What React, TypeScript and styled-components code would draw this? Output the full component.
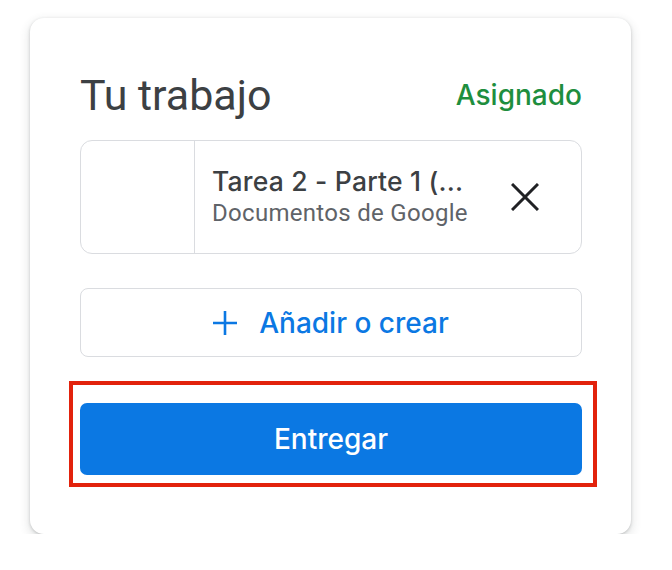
import styled, { createGlobalStyle } from 'styled-components'

const GlobalStyle = createGlobalStyle`
  * {
    box-sizing: border-box;
  }

  body {
    margin: 0;
    background: #fff;
    font-family: Roboto, 'Liberation Sans', sans-serif;
  }
`

const medium = `Inter, Roboto, 'Liberation Sans', sans-serif`

const Card = styled.section`
  width: 601px;
  margin: 18px 0 0 30px;
  padding: 52px 49px 59px 50px;
  background: #fff;
  border-radius: 14px;
  box-shadow: 0 1px 3px rgba(60, 64, 67, 0.25), 0 4px 10px 2px rgba(60, 64, 67, 0.12);
  display: flex;
  flex-direction: column;
`

const Header = styled.header`
  display: flex;
  justify-content: space-between;
  align-items: flex-start;
  margin-bottom: 20px;
`

const Title = styled.h2`
  margin: 0;
  font-size: 43px;
  line-height: 50px;
  font-weight: 400;
  color: #3c4043;
`

const Status = styled.span`
  font-family: ${medium};
  font-size: 28px;
  line-height: 50px;
  font-weight: 500;
  color: #1e8e3e;
`

const Attachment = styled.div`
  display: flex;
  height: 114px;
  border: 1px solid #dadce0;
  border-radius: 12px;
  margin-bottom: 34px;
`

const Thumb = styled.div`
  width: 114px;
  flex-shrink: 0;
  border-right: 1px solid #dadce0;
`

const Info = styled.div`
  flex: 1;
  min-width: 0;
  padding-left: 17px;
  display: flex;
  flex-direction: column;
  justify-content: center;
`

const FileName = styled.div`
  font-family: ${medium};
  font-size: 26.5px;
  line-height: 32px;
  font-weight: 500;
  letter-spacing: 0.2px;
  color: #3c4043;
  white-space: nowrap;
  overflow: hidden;
  text-overflow: ellipsis;
`

const FileType = styled.div`
  font-size: 24px;
  line-height: 32px;
  letter-spacing: 0.3px;
  color: #5f6368;
  white-space: nowrap;
`

const RemoveButton = styled.button`
  align-self: center;
  width: 48px;
  height: 48px;
  margin: 0 32px 0 12px;
  padding: 0;
  border: none;
  background: none;
  display: flex;
  align-items: center;
  justify-content: center;
  cursor: pointer;
`

const AddButton = styled.button`
  height: 69px;
  margin-bottom: 46px;
  border: 1px solid #dadce0;
  border-radius: 8px;
  background: #fff;
  display: flex;
  align-items: center;
  justify-content: center;
  gap: 22px;
  font-family: ${medium};
  font-size: 28px;
  font-weight: 500;
  color: #0b78e3;
  cursor: pointer;
`

const SubmitArea = styled.div`
  position: relative;
`

const SubmitButton = styled.button`
  width: 100%;
  height: 72px;
  border: none;
  border-radius: 7px;
  background: #0b78e3;
  color: #fff;
  font-family: ${medium};
  font-size: 28px;
  font-weight: 500;
  cursor: pointer;
`

const Highlight = styled.div`
  position: absolute;
  top: -22px;
  right: -15px;
  bottom: -12px;
  left: -11px;
  border: 4px solid #e2220c;
  pointer-events: none;
`

const CloseIcon = () => (
  <svg width="28" height="28" viewBox="0 0 28 28">
    <path d="M1 1L27 27M27 1L1 27" stroke="#202124" strokeWidth="3" fill="none" />
  </svg>
)

const PlusIcon = () => (
  <svg width="24" height="24" viewBox="0 0 24 24">
    <path d="M12 0V24M0 12H24" stroke="#0b78e3" strokeWidth="2.6" fill="none" />
  </svg>
)

const App = () => {
  return (
    <>
      <GlobalStyle />
      <Card>
        <Header>
          <Title>Tu trabajo</Title>
          <Status>Asignado</Status>
        </Header>
        <Attachment>
          <Thumb />
          <Info>
            <FileName>Tarea 2 - Parte 1 (...</FileName>
            <FileType>Documentos de Google</FileType>
          </Info>
          <RemoveButton aria-label="Quitar">
            <CloseIcon />
          </RemoveButton>
        </Attachment>
        <AddButton>
          <PlusIcon />
          Añadir o crear
        </AddButton>
        <SubmitArea>
          <SubmitButton>Entregar</SubmitButton>
          <Highlight />
        </SubmitArea>
      </Card>
    </>
  )
}

export default App
